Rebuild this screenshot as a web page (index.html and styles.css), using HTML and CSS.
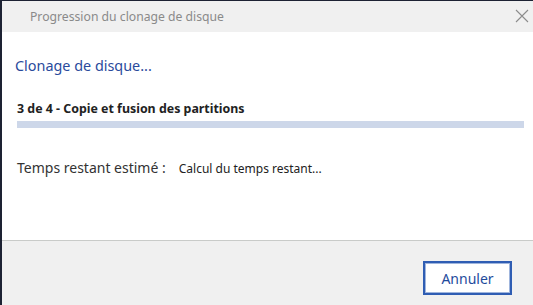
FILE: index.html
```html
<!DOCTYPE html>
<html lang="fr">
<head>
<meta charset="utf-8">
<title>Progression du clonage de disque</title>
<link rel="stylesheet" href="styles.css">
</head>
<body>
<div class="window">
  <div class="titlebar">
    <span class="title">Progression du clonage de disque</span>
    <svg class="close" width="14" height="14" viewBox="0 0 14 14"><path d="M1 1 L13 13 M13 1 L1 13" stroke="#8c8c8c" stroke-width="1.1" fill="none"/></svg>
  </div>
  <div class="content">
    <div class="heading">Clonage de disque...</div>
    <div class="step">3 de 4 - Copie et fusion des partitions</div>
    <div class="bar"></div>
    <div class="time">
      <span class="label">Temps restant estimé :</span>
      <span class="value">Calcul du temps restant...</span>
    </div>
  </div>
  <div class="footer">
    <button class="btn">Annuler</button>
  </div>
</div>
</body>
</html>
```
FILE: styles.css
```css
html, body {
  margin: 0;
  padding: 0;
  background: #ffffff;
}
body {
  width: 533px;
  height: 305px;
  overflow: hidden;
  font-family: "Noto Sans", "Open Sans", sans-serif;
}
.window {
  box-sizing: border-box;
  width: 533px;
  height: 305px;
  border-top: 1px solid #1d2233;
  border-left: 2px solid #1d2233;
  display: flex;
  flex-direction: column;
}
.titlebar {
  height: 31px;
  background: #f0f0f0;
  display: flex;
  align-items: center;
  justify-content: space-between;
  padding: 0 4px 0 28px;
}
.title {
  font-size: 12.2px;
  color: #8a8a8a;
}
.close {
  display: block;
  margin-top: -1px;
}
.content {
  height: 208px;
  background: #ffffff;
  padding: 24px 9px 0 13px;
  box-sizing: border-box;
}
.heading {
  font-size: 14.4px;
  color: #2a4a9c;
  line-height: 20px;
}
.step {
  margin-top: 25px;
  font-size: 12.4px;
  font-weight: bold;
  color: #222;
  line-height: 16px;
  padding-left: 2px;
}
.bar {
  margin-top: 4px;
  margin-left: 2px;
  height: 7px;
  background: #cdd7e9;
}
.time {
  margin-top: 30px;
  padding-left: 2px;
  display: flex;
  align-items: baseline;
  gap: 13px;
}
.label {
  font-size: 14px;
  color: #333;
}
.value {
  font-size: 12px;
  color: #222;
}
.footer {
  flex: 1;
  background: #f0f0f0;
  border-top: 1px solid #c9cbc9;
  display: flex;
  justify-content: flex-end;
  align-items: flex-start;
  padding: 20px 21px 0 0;
}
.btn {
  width: 89px;
  height: 34px;
  background: #ffffff;
  border: 2px solid #2f5db3;
  box-shadow: inset 0 0 0 1px #9fb5dd;
  font-family: "Noto Sans", "Open Sans", sans-serif;
  font-size: 14px;
  color: #1e4b9c;
  padding: 0;
}
```
